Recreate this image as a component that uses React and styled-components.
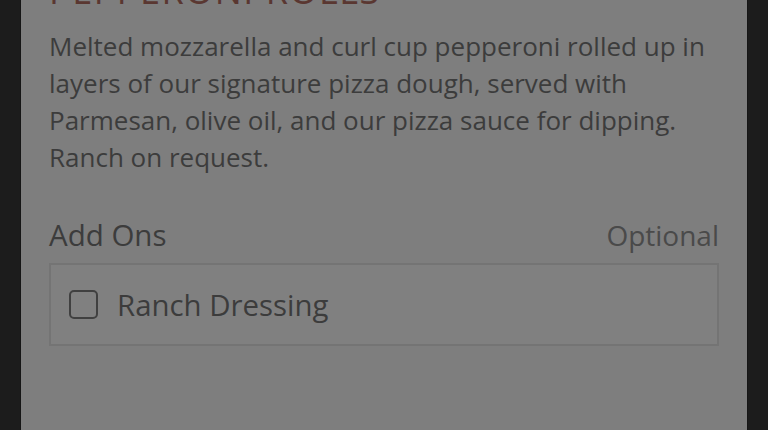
import React from "react";
import styled, { createGlobalStyle } from "styled-components";

const Global = createGlobalStyle`
  html, body { margin: 0; padding: 0; background: #1c1c1c; overflow: hidden; }
  body { font-family: "Open Sans", "Noto Sans", sans-serif; }
`;

const Page = styled.div`
  height: 430px;
  display: flex;
  justify-content: center;
  background: #1c1c1c;
  overflow: hidden;
`;

const Modal = styled.div`
  width: 728px;
  box-sizing: border-box;
  background: #7e7e7e;
  border-left: 1px solid #161616;
  border-right: 1px solid #161616;
  padding: 0 28px 0 28px;
  margin-top: -30px;
  display: flex;
  flex-direction: column;
`;

const Title = styled.h1`
  margin: 0;
  font-size: 36px;
  line-height: 42px;
  font-weight: 400;
  letter-spacing: 1.5px;
  color: #5a3731;
  text-transform: uppercase;
  white-space: nowrap;
`;

const Description = styled.p`
  margin: 16px 0 0;
  font-size: 26px;
  line-height: 37px;
  color: #3c3c3c;
`;

const SectionHeader = styled.div`
  display: flex;
  justify-content: space-between;
  align-items: baseline;
  margin-top: 41px;
`;

const SectionTitle = styled.span`
  font-size: 29.5px;
  line-height: 36px;
  color: #3c3c3c;
`;

const SectionNote = styled.span`
  font-size: 28px;
  line-height: 36px;
  color: #4a4a4a;
`;

const OptionBox = styled.label`
  margin-top: 10px;
  display: flex;
  align-items: center;
  gap: 19px;
  height: 83px;
  box-sizing: border-box;
  padding: 0 18px;
  border: 2px solid #747474;
  background: #808080;
`;

const Check = styled.span`
  width: 29px;
  height: 29px;
  box-sizing: border-box;
  border: 2.5px solid #404040;
  border-radius: 5px;
  flex: none;
`;

const OptionLabel = styled.span`
  font-size: 29.4px;
  line-height: 36px;
  color: #3c3c3c;
`;

export default function App() {
  return (
    <>
      <Global />
      <Page>
        <Modal>
          <Title>Pepperoni Rolls</Title>
          <Description>
            Melted mozzarella and curl cup pepperoni rolled up in layers of our
            signature pizza dough, served with Parmesan, olive oil, and our
            pizza sauce for dipping. Ranch on request.
          </Description>
          <SectionHeader>
            <SectionTitle>Add Ons</SectionTitle>
            <SectionNote>Optional</SectionNote>
          </SectionHeader>
          <OptionBox>
            <Check />
            <OptionLabel>Ranch Dressing</OptionLabel>
          </OptionBox>
        </Modal>
      </Page>
    </>
  );
}
